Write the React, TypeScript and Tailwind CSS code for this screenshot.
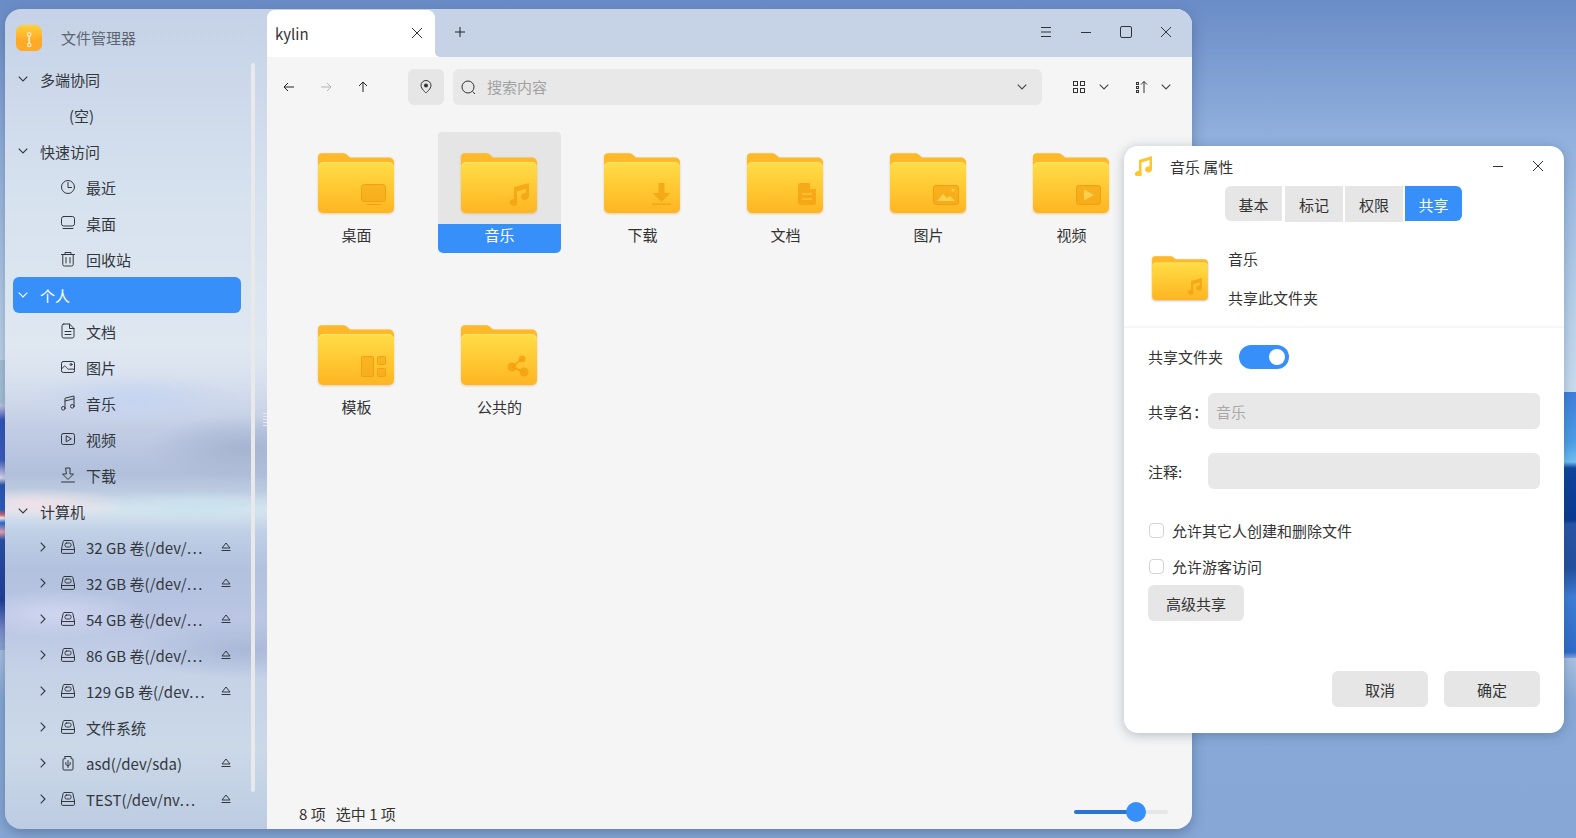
import React from "react";

type IconProps = { className?: string };

const Line = ({ className, children, size = 16 }: IconProps & { children: React.ReactNode; size?: number }) => (
  <svg
    viewBox={`0 0 ${size} ${size}`}
    width={size}
    height={size}
    fill="none"
    stroke="currentColor"
    strokeWidth="1"
    strokeLinecap="round"
    strokeLinejoin="round"
    className={className}
  >
    {children}
  </svg>
);

const Clock = () => (
  <Line>
    <circle cx="8" cy="8" r="6.5" />
    <path d="M8 3.5v5h3.5" />
  </Line>
);
const Desktop = () => (
  <Line>
    <rect x="1.5" y="1.5" width="13" height="9.5" rx="2.2" />
    <path d="M3 13.5h10" />
  </Line>
);
const Trash = () => (
  <Line>
    <path d="M1.5 3.5h13M5 3.5V1.5h6v2M2.8 3.5v10a1.5 1.5 0 0 0 1.5 1.5h7.4a1.5 1.5 0 0 0 1.5-1.5v-10M6 6.5v5.5M10 6.5v5.5" />
  </Line>
);
const Doc = () => (
  <Line>
    <path d="M3.8 1h5.7l4.500 4.500v7.700a1.800 1.800 0 0 1-1.800 1.800H3.800A1.800 1.800 0 0 1 2 13.200V2.800A1.800 1.800 0 0 1 3.800 1zM9.500 1v4.500H14M5 8.500h6M5 11.500h6" />
  </Line>
);
const Picture = () => (
  <Line>
    <rect x="1.5" y="2.5" width="13" height="11" rx="1.8" />
    <path d="M1.500 10l3-3c1.200 0 2.500 2.800 4 3.200s3-1 6 .3" />
    <circle cx="11" cy="5.5" r="1" />
  </Line>
);
const Music = () => (
  <Line>
    <path d="M5 13V3.200L14 1v10M5 6l9-2.200" />
    <circle cx="3.300" cy="13.300" r="1.800" />
    <circle cx="12.300" cy="11.300" r="1.800" />
  </Line>
);
const Video = () => (
  <Line>
    <rect x="1.5" y="2.5" width="13" height="11" rx="1.8" />
    <path d="M6.200 5.200v5.600L11 8z" />
  </Line>
);
const Download = () => (
  <Line>
    <path d="M6 1h4v6h3.500L8 12.500 2.500 7H6zM1.500 15h13" />
  </Line>
);
const Drive = () => (
  <Line>
    <path d="M4.300 1.500h7.400a1.200 1.200 0 0 1 1.100.9L14.500 10v3.200a1.200 1.200 0 0 1-1.200 1.200H2.700a1.200 1.200 0 0 1-1.200-1.200V10l1.700-7.600a1.200 1.200 0 0 1 1.100-.9zM1.500 10.500h13" />
    <rect x="5" y="4" width="6" height="4" rx="1.5" />
  </Line>
);
const Usb = () => (
  <Line>
    <path d="M5 1.500h6v2.200h1a1 1 0 0 1 1 1V14a1 1 0 0 1-1 1H4a1 1 0 0 1-1-1V4.700a1 1 0 0 1 1-1h1zM8 5.500v7M5.800 7.500v2L8 11l2.200-1.500v-2" />
  </Line>
);
const Eject = () => (
  <svg viewBox="0 0 10 10" width="10" height="10" fill="none" stroke="currentColor" strokeWidth="1">
    <path d="M5 1L1 6h8zM.5 8.500h9" />
  </svg>
);
const Chevron = ({ className }: IconProps) => (
  <svg viewBox="0 0 10 6" width="10" height="6" fill="none" stroke="currentColor" strokeWidth="1.1" className={className}>
    <path d="M.7.7L5 5 9.300.7" />
  </svg>
);
const ChevronRight = () => (
  <svg viewBox="0 0 6 10" width="6" height="10" fill="none" stroke="currentColor" strokeWidth="1.1">
    <path d="M.7.7L5 5 .7 9.300" />
  </svg>
);

const AppIcon = () => (
  <svg viewBox="0 0 26 26" width="26" height="26">
    <defs>
      <linearGradient id="appbg" x1="0" y1="0" x2="0" y2="1">
        <stop offset="0" stopColor="#ffcf3a" />
        <stop offset="1" stopColor="#ff941f" />
      </linearGradient>
    </defs>
    <rect width="26" height="26" rx="7" fill="url(#appbg)" />
    <path d="M0 12l13 6 13-6v7a7 7 0 0 1-7 7H7a7 7 0 0 1-7-7z" fill="#ffa928" />
    <rect x="12.400" y="8" width="1.600" height="12" fill="#ffeec4" />
    <circle cx="13.200" cy="9.500" r="2.300" fill="#ffeec4" />
    <circle cx="13.200" cy="9.500" r=".9" fill="#ef9a2c" />
    <circle cx="13.200" cy="20" r="2.300" fill="#ffeec4" />
    <circle cx="13.200" cy="20" r=".9" fill="#ef9a2c" />
  </svg>
);

const emblemFill = "#f2a010";

const emblems: Record<string, React.ReactNode> = {
  desktop: (
    <g fill={emblemFill} fillOpacity=".5" stroke={emblemFill}>
      <rect x="43.500" y="31.500" width="24" height="17" rx="3" />
      <path d="M49 51.500h14" fill="none" />
    </g>
  ),
  music: <path d="M53 46V34l15-4v13.500a4 3.500 0 1 1-3-3.400V36l-9 2.400v9.100a4 3.500 0 1 1-3-1.500z" fill={emblemFill} fillOpacity=".75" />,
  download: (
    <g fill={emblemFill} fillOpacity=".75">
      <path d="M54.500 30h6v10h6l-9 9-9-9h6z" />
      <rect x="48" y="50.500" width="19" height="1.500" />
    </g>
  ),
  doc: (
    <g fill={emblemFill} fillOpacity=".75">
      <path d="M53.500 30H63v6h6v13.500a2.500 2.500 0 0 1-2.500 2.500h-13a2.500 2.500 0 0 1-2.500-2.500v-17a2.500 2.500 0 0 1 2.500-2.500z" />
      <path d="M55 41h10M55 46h10" stroke="#ffcf4a" strokeWidth="1.200" />
    </g>
  ),
  picture: (
    <g>
      <rect x="43.500" y="32.500" width="25" height="19" rx="2.500" fill={emblemFill} fillOpacity=".6" stroke={emblemFill} />
      <path d="M47 48l6-7 4 4 3-2 5 5z" fill="#ffd04e" />
      <circle cx="63" cy="37" r="1.500" fill="#ffd04e" />
    </g>
  ),
  video: (
    <g>
      <rect x="43.500" y="32.500" width="24" height="19" rx="2.500" fill={emblemFill} fillOpacity=".6" stroke={emblemFill} />
      <path d="M51 36.500l10 5.500-10 5.500z" fill="#ffd04e" />
    </g>
  ),
  template: (
    <g fill={emblemFill} fillOpacity=".5" stroke={emblemFill}>
      <rect x="43.500" y="31.500" width="12" height="20" rx="1" />
      <rect x="59.500" y="31.500" width="8" height="8" rx="1" />
      <rect x="59.500" y="43.500" width="8" height="8" rx="1" />
    </g>
  ),
  share: (
    <g fill={emblemFill} fillOpacity=".8">
      <circle cx="61" cy="34" r="3.500" />
      <circle cx="51" cy="42" r="4.500" />
      <circle cx="63" cy="47" r="4.500" />
      <path d="M51 42l10-8M51 42l12 5" fill="none" stroke={emblemFill} strokeWidth="1.500" />
    </g>
  ),
};

const Folder = ({ emblem, className }: { emblem: string; className?: string }) => (
  <svg viewBox="0 0 76 60" className={className} width="76" height="60">
    <defs>
      <linearGradient id={`front-${emblem}`} x1="0" y1="0" x2="0" y2="1">
        <stop offset="0" stopColor="#ffdd46" />
        <stop offset="1" stopColor="#ffb522" />
      </linearGradient>
    </defs>
    <path d="M4 .3h21.500c1 0 2 .4 2.800 1L32 4.500h39a5 5 0 0 1 5 5V20H0V4.300a4 4 0 0 1 4-4z" fill="#fdb927" />
    <path d="M5 9h66a5 5 0 0 1 5 5v41a5 5 0 0 1-5 5H5a5 5 0 0 1-5-5V14a5 5 0 0 1 5-5z" fill={`url(#front-${emblem})`} />
    <path d="M1 14a4.500 4.500 0 0 1 4.500-4.500h65A4.500 4.500 0 0 1 75 14" fill="none" stroke="#ffe680" strokeWidth=".8" />
    {emblems[emblem]}
  </svg>
);

const sidebar: { kind: "head" | "item" | "empty"; label: string; icon?: React.ReactNode; arrow?: boolean; eject?: boolean; active?: boolean }[] = [
  { kind: "head", label: "多端协同" },
  { kind: "empty", label: "(空)" },
  { kind: "head", label: "快速访问" },
  { kind: "item", label: "最近", icon: <Clock /> },
  { kind: "item", label: "桌面", icon: <Desktop /> },
  { kind: "item", label: "回收站", icon: <Trash /> },
  { kind: "head", label: "个人", active: true },
  { kind: "item", label: "文档", icon: <Doc /> },
  { kind: "item", label: "图片", icon: <Picture /> },
  { kind: "item", label: "音乐", icon: <Music /> },
  { kind: "item", label: "视频", icon: <Video /> },
  { kind: "item", label: "下载", icon: <Download /> },
  { kind: "head", label: "计算机" },
  { kind: "item", label: "32 GB 卷(/dev/⋯", icon: <Drive />, arrow: true, eject: true },
  { kind: "item", label: "32 GB 卷(/dev/⋯", icon: <Drive />, arrow: true, eject: true },
  { kind: "item", label: "54 GB 卷(/dev/⋯", icon: <Drive />, arrow: true, eject: true },
  { kind: "item", label: "86 GB 卷(/dev/⋯", icon: <Drive />, arrow: true, eject: true },
  { kind: "item", label: "129 GB 卷(/dev⋯", icon: <Drive />, arrow: true, eject: true },
  { kind: "item", label: "文件系统", icon: <Drive />, arrow: true },
  { kind: "item", label: "asd(/dev/sda)", icon: <Usb />, arrow: true, eject: true },
  { kind: "item", label: "TEST(/dev/nv⋯", icon: <Drive />, arrow: true, eject: true },
];

const files = [
  { label: "桌面", emblem: "desktop" },
  { label: "音乐", emblem: "music", selected: true },
  { label: "下载", emblem: "download" },
  { label: "文档", emblem: "doc" },
  { label: "图片", emblem: "picture" },
  { label: "视频", emblem: "video" },
  { label: "模板", emblem: "template" },
  { label: "公共的", emblem: "share" },
];

function SidebarRow({ row }: { row: (typeof sidebar)[number] }) {
  if (row.kind === "head") {
    return (
      <div className={`flex h-[36px] w-[228px] items-center rounded-[6px] ${row.active ? "bg-[#3790fa] text-white" : "text-[#33373d]"}`}>
        <span className="flex w-[27px] justify-center pr-[7px]">
          <Chevron />
        </span>
        <span className="pt-[2px]">{row.label}</span>
      </div>
    );
  }
  if (row.kind === "empty") {
    return (
      <div className="flex h-[36px] w-[228px] items-center pl-[56px] text-[#33373d]">
        <span className="pt-[2px]">{row.label}</span>
      </div>
    );
  }
  return (
    <div className="flex h-[36px] w-[228px] items-center text-[#33373d]">
      <span className="flex w-[47px] pl-[27px]">{row.arrow && <ChevronRight />}</span>
      <span className="flex w-[16px] justify-center">{row.icon}</span>
      <span className="ml-[10px] flex-1 whitespace-nowrap pt-[2px]">{row.label}</span>
      {row.eject && (
        <span className="mr-[10px] flex">
          <Eject />
        </span>
      )}
    </div>
  );
}

function FileCell({ label, emblem, selected }: { label: string; emblem: string; selected?: boolean }) {
  return (
    <div className="flex h-[121px] w-[123px] flex-col">
      <div className={`flex h-[92px] justify-center rounded-t-[4px] pr-[2px] pt-[21px] ${selected ? "bg-[#e5e5e5]" : ""}`}>
        <Folder emblem={emblem} className="drop-shadow-[0_1px_1px_rgba(190,130,20,0.35)]" />
      </div>
      <div className={`flex h-[29px] items-start justify-center rounded-b-[5px] pt-[1px] ${selected ? "bg-[#3790fa] text-white" : "text-[#333]"}`}>
        {label}
      </div>
    </div>
  );
}

const Btn = ({ children, className = "" }: { children: React.ReactNode; className?: string }) => (
  <div className={`flex h-[36px] w-[96px] items-center justify-center rounded-[6px] bg-[#e6e6e6] pt-[1px] text-[#333] ${className}`}>{children}</div>
);

const Check = ({ label, className = "" }: { label: string; className?: string }) => (
  <div className={`flex h-[16px] items-center ${className}`}>
    <span className="h-[15px] w-[15px] rounded-[4px] border border-[#d3d3d3] bg-white" />
    <span className="ml-[8px] pt-[2px] text-[#333]">{label}</span>
  </div>
);

const Field = ({ label, placeholder, className = "" }: { label: string; placeholder?: string; className?: string }) => (
  <div className={`flex h-[36px] items-center ${className}`}>
    <span className="w-[60px] pt-[2px] text-[#333]">{label}</span>
    <div className="flex h-[36px] flex-1 items-center rounded-[6px] bg-[#e8e8e8] pl-[8px] pt-[2px] text-[#a8a8a8]">{placeholder}</div>
  </div>
);

const Seg = ({ children, className = "" }: { children: React.ReactNode; className?: string }) => (
  <div className={`flex h-[35px] items-center justify-center pl-[1px] pt-[2px] ${className}`}>{children}</div>
);

export default function App() {
  return (
    <div className="relative h-[838px] w-[1576px] overflow-hidden bg-[linear-gradient(#6a8cc7_0,#93b2de_146px,#b7cfe9_300px,#c9dcee_392px,#a7c0e0_660px,#88a9d7_700px,#87a8d6_838px)] font-[family-name:'Noto_Sans_CJK_SC','Noto_Sans',sans-serif] text-[15px] leading-[20px]">
      {/* wallpaper bits that show around the windows */}
      <div className="absolute left-0 top-[360px] h-[290px] w-[5px] bg-[linear-gradient(#a9c4d8_0,#a9c4d8_42px,#c9c4e4_46px,#2f55b8_60px,#3a5cc0_100px,#e6e2f2_118px,#2a56b4_125px,#2a60c0_150px,#e66_155px,#fff_158px,#2a6ed0_163px,#f4a8b8_172px,#2a50a8_180px,#1e3f98_240px,#7d8ed0_270px,#8ba6d4_285px)]" />
      <div className="absolute right-0 top-[392px] h-[266px] w-[12px] bg-[linear-gradient(#3f7fdc_0,#4b9fe8_50px,#6fc0f2_70px,#0f449e_76px,#0a3a92_128px,#2a55a8_132px,#24509f_176px,#3f7ed8_205px,#2e6ccb_260px,#7fa4da_266px)]" />

      {/* file manager */}
      <div className="absolute left-[5px] top-[9px] flex h-[820px] w-[1187px] overflow-hidden rounded-[16px] shadow-[0_4px_14px_rgba(30,50,90,0.35)]">
        <aside className="relative w-[262px] shrink-0 bg-[radial-gradient(ellipse_90px_16px_at_30px_495px,#f1e2e8,transparent),radial-gradient(ellipse_110px_16px_at_190px_498px,#c8e3ee,transparent),radial-gradient(ellipse_110px_26px_at_130px_390px,#c6d4f1,transparent),radial-gradient(ellipse_100px_34px_at_240px_440px,#a6b4d0,transparent),radial-gradient(ellipse_90px_24px_at_50px_605px,#d0d6f0,transparent),radial-gradient(ellipse_110px_30px_at_240px_640px,#aab8d8,transparent),linear-gradient(#c5d2e7_0,#d7e2ef_190px,#dfe8f1_340px,#d6dfed_375px,#c2cde5_420px,#b2bfdb_465px,#bccbe0_482px,#dae5ef_500px,#c0d0e6_522px,#b2c1de_560px,#bac6e3_610px,#c6d3e7_670px,#cbd8e8_740px,#bccce2_820px)]">
          <div className="flex h-[52px] items-center pl-[11px] pt-[6px]">
            <AppIcon />
            <span className="ml-[19px] text-[#5d6570]">文件管理器</span>
          </div>
          <div className="pl-[8px]">
            {sidebar.map((row, i) => (
              <SidebarRow key={i} row={row} />
            ))}
          </div>
          {/* scrollbar */}
          <div className="absolute left-[246px] top-[54px] h-[729px] w-[4px] rounded-full bg-[#e9e9e9]" />
          {/* splitter grip */}
          <div className="absolute left-[258px] top-[403px] h-[16px] w-[4px] bg-[radial-gradient(circle,#e4e8f0_1px,transparent_1px)] bg-[length:2px_3px]" />
        </aside>

        <main className="flex min-w-0 flex-1 flex-col bg-[#f5f5f5]">
          {/* tab bar */}
          <div className="flex h-[48px] shrink-0 bg-[linear-gradient(#c6d3e7_0,#c6d3e7_40px,#fff_40px)]">
            <div className="mt-[1px] flex w-[168px] items-center rounded-t-[8px] bg-white pl-[8px] text-[#333]">
              <span className="flex-1">kylin</span>
              <svg viewBox="0 0 12 12" width="12" height="12" fill="none" stroke="#333" strokeWidth="1" className="mr-[12px] -mt-[2px]">
                <path d="M1 1l10 10M11 1L1 11" />
              </svg>
            </div>
            <div className="flex flex-1 items-center rounded-bl-[5px] bg-[#c6d3e7] text-[#333]">
              <svg viewBox="0 0 10 10" width="10" height="10" fill="none" stroke="#222" strokeWidth="1" className="ml-[20px] -mt-[2px]">
                <path d="M5 0v10M0 5h10" />
              </svg>
              <div className="ml-auto flex -mt-[2px] pr-[6px]">
                {/* menu, minimise, maximise, close */}
                <span className="flex w-[40px] justify-center">
                  <svg viewBox="0 0 12 12" width="12" height="12" fill="none" stroke="#333">
                    <path d="M1 1.500h10M1 6h10M1 10.500h10" />
                  </svg>
                </span>
                <span className="flex w-[40px] justify-center">
                  <svg viewBox="0 0 12 12" width="12" height="12" fill="none" stroke="#333">
                    <path d="M1 6.500h10" />
                  </svg>
                </span>
                <span className="flex w-[40px] justify-center">
                  <svg viewBox="0 0 12 12" width="12" height="12" fill="none" stroke="#333">
                    <rect x=".5" y=".5" width="11" height="11" rx="1.500" />
                  </svg>
                </span>
                <span className="flex w-[40px] justify-center">
                  <svg viewBox="0 0 12 12" width="12" height="12" fill="none" stroke="#333">
                    <path d="M1 1l10 10M11 1L1 11" />
                  </svg>
                </span>
              </div>
            </div>
          </div>

          {/* toolbar */}
          <div className="mt-[12px] flex h-[36px] shrink-0 items-center text-[#222]">
            <span className="ml-[16px] flex w-[12px] justify-center">
              <svg viewBox="0 0 12 10" width="12" height="10" fill="none" stroke="currentColor">
                <path d="M11 5H1M5 1L1 5l4 4" />
              </svg>
            </span>
            <span className="ml-[25px] flex w-[12px] justify-center text-[#b5b5b5]">
              <svg viewBox="0 0 12 10" width="12" height="10" fill="none" stroke="currentColor">
                <path d="M1 5h10M7 1l4 4-4 4" />
              </svg>
            </span>
            <span className="ml-[26px] flex w-[10px] justify-center">
              <svg viewBox="0 0 10 12" width="10" height="12" fill="none" stroke="currentColor">
                <path d="M5 11V1M1 5l4-4 4 4" />
              </svg>
            </span>
            <div className="ml-[40px] flex h-[36px] w-[36px] items-center justify-center rounded-[6px] bg-[#e6e6e6]">
              <svg viewBox="0 0 12 14" width="12" height="14" fill="none" stroke="#333">
                <path d="M6 13S1 8.700 1 5.500a5 5 0 0 1 10 0C11 8.700 6 13 6 13z" />
                <circle cx="6" cy="5.500" r="2" fill="#333" stroke="none" />
              </svg>
            </div>
            <div className="ml-[9px] flex h-[36px] w-[589px] items-center rounded-[6px] bg-[#e8e8e8] pl-[8px]">
              <svg viewBox="0 0 15 15" width="15" height="15" fill="none" stroke="#333">
                <circle cx="7" cy="7" r="6" />
                <path d="M11.500 11.500L14 14" />
              </svg>
              <span className="ml-[11px] flex-1 text-[#a2a2a2]">搜索内容</span>
              <Chevron className="mr-[15px] text-[#444]" />
            </div>
            <svg viewBox="0 0 12 12" width="12" height="12" fill="none" stroke="#333" className="ml-[31px]">
              <rect x=".5" y=".5" width="4" height="4" />
              <rect x="7.500" y=".5" width="4" height="4" />
              <rect x=".5" y="7.500" width="4" height="4" />
              <rect x="7.500" y="7.500" width="4" height="4" />
            </svg>
            <Chevron className="ml-[14px] text-[#444]" />
            <svg viewBox="0 0 12 12" width="12" height="12" fill="none" stroke="#333" className="ml-[27px]">
              <rect x=".5" y="1.500" width="2" height="2" />
              <rect x=".5" y="5.500" width="2" height="2" />
              <rect x=".5" y="9.500" width="2" height="2" />
              <path d="M8 12V.5M5 3.500l3-3 3 3" />
            </svg>
            <Chevron className="ml-[13px] text-[#444]" />
          </div>

          {/* folders */}
          <div className="mt-[27px] grid flex-1 grid-cols-[repeat(6,123px)] content-start gap-x-[20px] gap-y-[51px] pl-[28px]">
            {files.map((f) => (
              <FileCell key={f.label} {...f} />
            ))}
          </div>

          {/* status bar */}
          <div className="flex h-[29px] shrink-0 items-start pl-[32px] pr-[24px] text-[#333]">
            <span className="whitespace-pre pt-[4px]">8 项   选中 1 项</span>
            <div className="relative ml-auto mt-[10px] h-[4px] w-[94px] rounded-full bg-[#e6e6e6]">
              <div className="h-[4px] w-[62px] rounded-full bg-[#2b74d4]" />
              <div className="absolute left-[52px] top-[-8px] h-[20px] w-[20px] rounded-full bg-[#3790fa]" />
            </div>
          </div>
        </main>
      </div>

      {/* properties dialog */}
      <div className="absolute left-[1124px] top-[146px] flex h-[587px] w-[440px] flex-col rounded-[14px] bg-white shadow-[0_2px_12px_rgba(30,50,90,0.3)]">
        <div className="flex h-[40px] shrink-0 items-center pl-[10px]">
          <svg viewBox="0 0 18 20" width="18" height="20" className="-mt-[1px]">
            <path d="M5 15V4l13-4v13.500a3.500 3 0 1 1-2.500-2.900V4L7.500 6.500v10a3.500 3 0 1 1-2.500-1.500z" fill="#ffc52f" />
          </svg>
          <span className="ml-[18px] pt-[2px] text-[#333]">音乐 属性</span>
          <div className="ml-auto flex -mt-[1px] pr-[6px] text-[#333]">
            <span className="flex w-[40px] justify-center">
              <svg viewBox="0 0 12 12" width="12" height="12" fill="none" stroke="currentColor">
                <path d="M1 6.500h10" />
              </svg>
            </span>
            <span className="flex w-[40px] justify-center">
              <svg viewBox="0 0 12 12" width="12" height="12" fill="none" stroke="currentColor">
                <path d="M1 1l10 10M11 1L1 11" />
              </svg>
            </span>
          </div>
        </div>
        <div className="flex h-[36px] shrink-0 justify-center pr-[2px] text-[#333]">
          <Seg className="w-[57px] rounded-l-[6px] bg-[#e6e6e6]">基本</Seg>
          <Seg className="ml-[3px] h-[36px] w-[58px] bg-[#e6e6e6]">标记</Seg>
          <Seg className="ml-[2px] h-[36px] w-[58px] bg-[#e6e6e6]">权限</Seg>
          <Seg className="ml-[2px] w-[57px] rounded-r-[6px] bg-[#3790fa] text-white">共享</Seg>
        </div>
        <div className="flex h-[106px] shrink-0 border-b-2 border-[#f6f6f6]">
          <div className="ml-[28px] pt-[34px]">
            <Folder emblem="music" className="h-[44px] w-[56px] drop-shadow-[0_1px_1px_rgba(120,90,20,0.4)]" />
          </div>
          <div className="ml-[20px] flex flex-col pt-[27px] text-[#333]">
            <span>音乐</span>
            <span className="mt-[19px]">共享此文件夹</span>
          </div>
        </div>
        <div className="flex flex-1 flex-col pl-[24px] pr-[24px]">
          <div className="mt-[17px] flex h-[24px] items-center text-[#333]">
            <span>共享文件夹</span>
            <div className="ml-[16px] flex h-[24px] w-[50px] items-center justify-end rounded-full bg-[#3790fa] pr-[4px]">
              <span className="h-[16px] w-[16px] rounded-full bg-white" />
            </div>
          </div>
          <Field label="共享名：" placeholder="音乐" className="mt-[24px]" />
          <Field label="注释:" className="mt-[24px]" />
          <Check label="允许其它人创建和删除文件" className="mt-[33px] pl-[1px]" />
          <Check label="允许游客访问" className="mt-[20px] pl-[1px]" />
          <Btn className="mt-[11px]">高级共享</Btn>
          <div className="mt-[50px] flex justify-end gap-[16px]">
            <Btn>取消</Btn>
            <Btn>确定</Btn>
          </div>
        </div>
      </div>
    </div>
  );
}
